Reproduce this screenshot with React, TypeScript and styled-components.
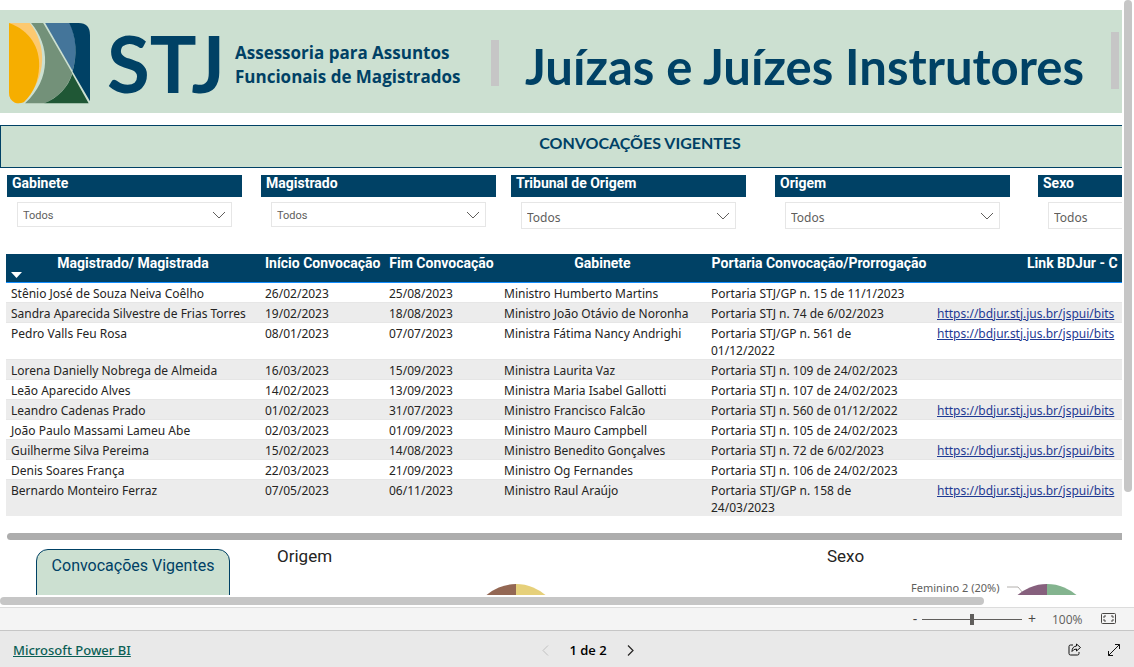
import React from "react";
import styled, { createGlobalStyle } from "styled-components";

const navy = "#004165";
const mint = "#cce0d1";
const segoe = `"Open Sans", "Noto Sans", sans-serif`;
const noto = `"Noto Sans", "Open Sans", sans-serif`;
const din = `Roboto, "Open Sans", sans-serif`;
const calibri = `Lato, "Open Sans", sans-serif`;

const GlobalStyle = createGlobalStyle`
  * { box-sizing: border-box; }
  html, body { margin: 0; background: #fff; }
  body { font-family: ${segoe}; font-size: 12px; color: #252423; }
  button { border: 0; padding: 0; background: none; font: inherit; color: inherit; }
`;

const Shell = styled.div`
  display: flex;
  flex-direction: column;
  height: 100vh;
  overflow: hidden;
`;

const Viewer = styled.main`
  flex: 1;
  min-height: 0;
  display: grid;
  grid-template-columns: minmax(0, 1fr) 8px;
  grid-template-rows: minmax(0, 1fr) 8px;
  gap: 2px;
  padding: 0 2px 2px 0;
`;

const Viewport = styled.div`
  overflow: hidden;
`;

const Track = styled.div<{ $vertical?: boolean }>`
  display: flex;
  flex-direction: ${(p) => (p.$vertical ? "column" : "row")};
`;

const Thumb = styled.div<{ $share: number }>`
  flex: 0 0 ${(p) => p.$share}%;
  border-radius: 4px;
  background: #c6c6c6;
`;

const Page = styled.div`
  min-width: 1280px;
  padding-top: 10px;
`;

const Header = styled.header`
  display: flex;
  align-items: center;
  height: 103px;
  padding: 3px 0 0 9px;
  background: ${mint};
  color: ${navy};
`;

const Brand = styled.div`
  display: flex;
  align-items: center;
  gap: 17px;
  width: 226px;

  svg { flex: none; }
`;

const Wordmark = styled.span`
  font: 700 78px/80px ${calibri};
`;

const Department = styled.p`
  width: 256px;
  margin: 0;
  padding-top: 3px;
  font-size: 17px;
  font-weight: 700;
  line-height: 24px;
`;

const Divider = styled.span`
  width: 8px;
  height: 46px;
  background: #c6c6c6;
`;

const TallDivider = styled(Divider)`
  align-self: flex-start;
  height: 57px;
  margin-top: 19px;
`;

const Title = styled.h1`
  width: 586px;
  margin: 0 0 0 26px;
  padding-top: 6px;
  font: 700 49px/60px ${calibri};
  white-space: nowrap;
`;

const Banner = styled.h2`
  height: 43px;
  margin: 12px 0 7px;
  border: 1px solid ${navy};
  background: ${mint};
  color: ${navy};
  font: 700 16px/34px ${calibri};
  text-align: center;
`;

const Slicers = styled.div`
  display: grid;
  grid-template-columns: 254px 250px 264px 263px 235px;
  height: 79px;
  padding-left: 7px;
`;

const Slicer = styled.div`
  width: 235px;
`;

const SlicerLabel = styled.label`
  display: block;
  height: 22px;
  margin-bottom: 5px;
  padding-left: 5px;
  background: ${navy};
  color: #fff;
  font: 700 14px/17px ${din};
`;

const SelectBox = styled.div`
  display: grid;
  align-items: center;
  margin: 0 10px;

  & > * { grid-area: 1 / 1; }
  svg { justify-self: end; margin-right: 6px; pointer-events: none; }
`;

const Select = styled.select<{ $small?: boolean }>`
  appearance: none;
  width: 100%;
  height: ${(p) => (p.$small ? 25 : 27)}px;
  padding: ${(p) => (p.$small ? 2 : 4)}px 5px 0;
  border: 1px solid #e6e6e6;
  border-radius: 0;
  background: #fff;
  color: #605e5c;
  font: ${(p) => (p.$small ? `11px ${din}` : `12px ${noto}`)};
`;

const Table = styled.table`
  table-layout: fixed;
  width: 1272px;
  margin-left: 6px;
  border-collapse: separate;
  border-spacing: 0;
  font-family: ${noto};
  line-height: 17px;
`;

const HeadCell = styled.th`
  height: 29px;
  padding: 1px 5px 0;
  border-bottom: 1px solid #118dff;
  background: ${navy};
  color: #fff;
  font: 700 14px/17px ${din};
  vertical-align: top;
  white-space: nowrap;

  &:last-child {
    padding-left: 95px;
    text-align: left;
  }
`;

const HeadContent = styled.div`
  position: relative;
`;

const SortMark = styled.svg`
  position: absolute;
  left: 0;
  top: 17px;
`;

const Cell = styled.td`
  padding: 2px 5px 0;
  border-bottom: 1px solid #e6e6e6;
  vertical-align: top;
  white-space: nowrap;
`;

const WrapCell = styled(Cell)`
  padding-right: 15px;
  white-space: normal;
`;

const Row = styled.tr`
  &:nth-child(even) { background: #ececec; }
  &:last-child td { border-bottom: 0; }
`;

const DocLink = styled.a`
  color: #1f3a93;
  text-decoration: underline;
`;

const TableScroll = styled.div`
  height: 7px;
  margin: 17px 0 9px 7px;
  border-radius: 4px;
  background: #adadad;
`;

const Summary = styled.section`
  display: grid;
  grid-template-columns: 241px 550px 1fr;
  padding-left: 36px;
`;

const Card = styled.div`
  width: 194px;
  height: 120px;
  border: 1px solid ${navy};
  border-radius: 12px;
  background: ${mint};
  color: ${navy};
  font: 16px/32px ${din};
  text-align: center;
`;

const Chart = styled.figure`
  margin: 0;
`;

const ChartTitle = styled.figcaption`
  height: 27px;
  font: 17px/14px ${din};
`;

const ChartArea = styled.svg`
  display: block;
  text { font: 11px ${noto}; fill: #605e5c; }
`;

const ZoomBar = styled.div`
  display: flex;
  align-items: center;
  justify-content: flex-end;
  height: 23px;
  padding-right: 18px;
  border-top: 1px solid #dcdcdc;
  background: #f4f4f4;
  color: #605e5c;
`;

const ZoomButton = styled.button`
  width: 10px;
  font-size: 14px;
  line-height: 20px;
  color: #484644;
`;

const ZoomRange = styled.input`
  appearance: none;
  width: 100px;
  height: 12px;
  margin: 0 5px 0 2px;
  background: linear-gradient(#605e5c, #605e5c) center / 100% 1px no-repeat;

  &::-webkit-slider-thumb {
    appearance: none;
    width: 4px;
    height: 11px;
    background: #605e5c;
  }
`;

const ZoomValue = styled.span`
  width: 64px;
  padding-left: 15px;
  font-size: 12px;
`;

const FitButton = styled.button`
  display: flex;
`;

const Footer = styled.footer`
  display: grid;
  grid-template-columns: 1fr auto 1fr;
  align-items: center;
  height: 37px;
  padding: 2px 13px 0;
  border-top: 1px solid #c6c6c6;
  background: #e9e9e9;
`;

const BrandLink = styled.a`
  justify-self: start;
  color: #0b5f55;
  font: 500 13px/18px ${noto};
`;

const Pager = styled.nav`
  display: flex;
  align-items: center;
  gap: 20px;
  margin-right: -42px;
  color: #000;
  font-size: 13px;
  font-weight: 600;
`;

const PageButton = styled.button`
  display: flex;
  color: #252423;
  &:disabled { color: #c0c0c0; }
`;

const Actions = styled.div`
  display: flex;
  justify-self: end;
  gap: 25px;
`;

const Chevron = () => (
  <svg width="14" height="8" viewBox="0 0 14 8" fill="none" stroke="#605e5c">
    <path d="M1 1l6 6 6-6" />
  </svg>
);

const Emblem = () => (
  <svg width="81" height="81" viewBox="0 0 242 242">
    <path fill="#fcc970" d="M0 0H62C112 62 116 158 46 235Q30 242 18 238Q0 230 0 208Z" />
    <path fill="#f6ae00" d="M0 0C62 22 92 72 90 130C88 172 76 205 44 237Q30 242 18 238Q0 230 0 208Z" />
    <path fill="#739179" d="M66 0H102L189 150C176 192 148 222 105 240H48C128 168 122 66 66 0Z" />
    <path fill="#1f5735" d="M189 152L238 240H105C148 222 176 192 189 152Z" />
    <path fill="#44759a" d="M108 0H182C202 44 204 96 190 143Z" />
    <path fill={navy} d="M180 0H208Q242 0 242 36V234L190 145C204 96 202 44 180 0Z" />
  </svg>
);

const slicers = [
  { id: "gabinete", label: "Gabinete", small: true },
  { id: "magistrado", label: "Magistrado", small: true },
  { id: "tribunal", label: "Tribunal de Origem" },
  { id: "origem", label: "Origem" },
  { id: "sexo", label: "Sexo" },
];

const columns = [
  { name: "Magistrado/ Magistrada", width: 254 },
  { name: "Início Convocação", width: 124 },
  { name: "Fim Convocação", width: 115 },
  { name: "Gabinete", width: 207 },
  { name: "Portaria Convocação/Prorrogação", width: 226 },
  { name: "Link BDJur - C", width: 346 },
];

type Entry = [string, string, string, string, string, boolean];

const rows: Entry[] = [
  ["Stênio José de Souza Neiva Coêlho", "26/02/2023", "25/08/2023", "Ministro Humberto Martins", "Portaria STJ/GP n. 15 de 11/1/2023", false],
  ["Sandra Aparecida Silvestre de Frias Torres", "19/02/2023", "18/08/2023", "Ministro João Otávio de Noronha", "Portaria STJ n. 74 de 6/02/2023", true],
  ["Pedro Valls Feu Rosa", "08/01/2023", "07/07/2023", "Ministra Fátima Nancy Andrighi", "Portaria STJ/GP n. 561 de 01/12/2022", true],
  ["Lorena Danielly Nobrega de Almeida", "16/03/2023", "15/09/2023", "Ministra Laurita Vaz", "Portaria STJ n. 109 de 24/02/2023", false],
  ["Leão Aparecido Alves", "14/02/2023", "13/09/2023", "Ministra Maria Isabel Gallotti", "Portaria STJ n. 107 de 24/02/2023", false],
  ["Leandro Cadenas Prado", "01/02/2023", "31/07/2023", "Ministro Francisco Falcão", "Portaria STJ n. 560 de 01/12/2022", true],
  ["João Paulo Massami Lameu Abe", "02/03/2023", "01/09/2023", "Ministro Mauro Campbell", "Portaria STJ n. 105 de 24/02/2023", false],
  ["Guilherme Silva Pereima", "15/02/2023", "14/08/2023", "Ministro Benedito Gonçalves", "Portaria STJ n. 72 de 6/02/2023", true],
  ["Denis Soares França", "22/03/2023", "21/09/2023", "Ministro Og Fernandes", "Portaria STJ n. 106 de 24/02/2023", false],
  ["Bernardo Monteiro Ferraz", "07/05/2023", "06/11/2023", "Ministro Raul Araújo", "Portaria STJ/GP n. 158 de 24/03/2023", true],
];

export default function App() {
  return (
    <Shell>
      <GlobalStyle />
      <Viewer>
        <Viewport>
          <Page>
            <Header>
              <Brand>
                <Emblem />
                <Wordmark>STJ</Wordmark>
              </Brand>
              <Department>
                Assessoria para Assuntos
                <br />
                Funcionais de Magistrados
              </Department>
              <Divider />
              <Title>Juízas e Juízes Instrutores</Title>
              <TallDivider />
            </Header>

            <Banner>CONVOCAÇÕES VIGENTES</Banner>

            <Slicers>
              {slicers.map((s) => (
                <Slicer key={s.id}>
                  <SlicerLabel htmlFor={s.id}>{s.label}</SlicerLabel>
                  <SelectBox>
                    <Select id={s.id} $small={s.small}>
                      <option>Todos</option>
                    </Select>
                    <Chevron />
                  </SelectBox>
                </Slicer>
              ))}
            </Slicers>

            <Table>
              <colgroup>
                {columns.map((c) => (
                  <col key={c.name} width={c.width} />
                ))}
              </colgroup>
              <thead>
                <tr>
                  {columns.map((c, i) => (
                    <HeadCell key={c.name} scope="col">
                      <HeadContent>
                        {c.name}
                        {i === 0 && (
                          <SortMark width="11" height="6" viewBox="0 0 11 6">
                            <path d="M0 0h11L5.500 6z" fill="#fff" />
                          </SortMark>
                        )}
                      </HeadContent>
                    </HeadCell>
                  ))}
                </tr>
              </thead>
              <tbody>
                {rows.map(([name, start, end, office, order, linked]) => (
                  <Row key={name}>
                    <Cell>{name}</Cell>
                    <Cell>{start}</Cell>
                    <Cell>{end}</Cell>
                    <Cell>{office}</Cell>
                    <WrapCell>{order}</WrapCell>
                    <Cell>
                      {linked && <DocLink href="https://bdjur.stj.jus.br/jspui/">https://bdjur.stj.jus.br/jspui/bits</DocLink>}
                    </Cell>
                  </Row>
                ))}
              </tbody>
            </Table>
            <TableScroll />

            <Summary>
              <Card>Convocações Vigentes</Card>
              <Chart>
                <ChartTitle>Origem</ChartTitle>
                <ChartArea width="480" height="110">
                  <path d="M239 8a45 45 0 0 0 0 90z" fill="#936753" />
                  <path d="M239 8a45 45 0 0 1 0 90z" fill="#e6d07a" />
                </ChartArea>
              </Chart>
              <Chart>
                <ChartTitle>Sexo</ChartTitle>
                <ChartArea width="400" height="110">
                  <text x="84" y="16">Feminino 2 (20%)</text>
                  <path d="M180 11h11l5 6" fill="none" stroke="#b3b0ad" />
                  <path d="M220 8a45 45 0 0 0 0 90z" fill="#86607d" />
                  <path d="M220 8a45 45 0 0 1 0 90z" fill="#84b48f" />
                </ChartArea>
              </Chart>
            </Summary>
          </Page>
        </Viewport>
        <Track $vertical>
          <Thumb $share={82.7} />
        </Track>
        <Track>
          <Thumb $share={87.7} />
        </Track>
      </Viewer>

      <ZoomBar>
        <ZoomButton aria-label="Reduzir">-</ZoomButton>
        <ZoomRange type="range" min="0" max="200" defaultValue="100" aria-label="Zoom" />
        <ZoomButton aria-label="Ampliar">+</ZoomButton>
        <ZoomValue>100%</ZoomValue>
        <FitButton aria-label="Ajustar à página">
          <svg width="15" height="12" viewBox="0 0 15 12" fill="none" stroke="#484644">
            <rect x="0.500" y="0.500" width="14" height="10" rx="1" />
            <path d="M5 3H3v2M10 3h2v2M5 8H3V6M10 8h2V6" />
          </svg>
        </FitButton>
      </ZoomBar>

      <Footer>
        <BrandLink href="https://powerbi.microsoft.com">Microsoft Power BI</BrandLink>
        <Pager>
          <PageButton disabled aria-label="Página anterior">
            <svg width="7" height="11" viewBox="0 0 7 11" fill="none" stroke="currentColor">
              <path d="M6 .5l-5 5 5 5" />
            </svg>
          </PageButton>
          <span>1 de 2</span>
          <PageButton aria-label="Próxima página">
            <svg width="7" height="11" viewBox="0 0 7 11" fill="none" stroke="currentColor" strokeWidth="1.200">
              <path d="M1 .5l5 5-5 5" />
            </svg>
          </PageButton>
        </Pager>
        <Actions>
          <PageButton aria-label="Compartilhar">
            <svg width="14" height="13" viewBox="0 0 14 13" fill="none" stroke="#111" strokeLinejoin="round">
              <path d="M5 2H2.500Q1 2 1 3.500V10.500Q1 12 2.500 12H9.500Q11 12 11 10.500V9" />
              <path d="M8.500 1l4 3.500-4 3.500V6Q5.500 6 4 8.500Q4 3.500 8.500 3z" />
            </svg>
          </PageButton>
          <PageButton aria-label="Tela inteira">
            <svg width="14" height="14" viewBox="0 0 14 14" fill="none" stroke="#111">
              <path d="M1.500 12.500l11-11M8 1.500h4.500V6M1.500 8v4.500H6" />
            </svg>
          </PageButton>
        </Actions>
      </Footer>
    </Shell>
  );
}
